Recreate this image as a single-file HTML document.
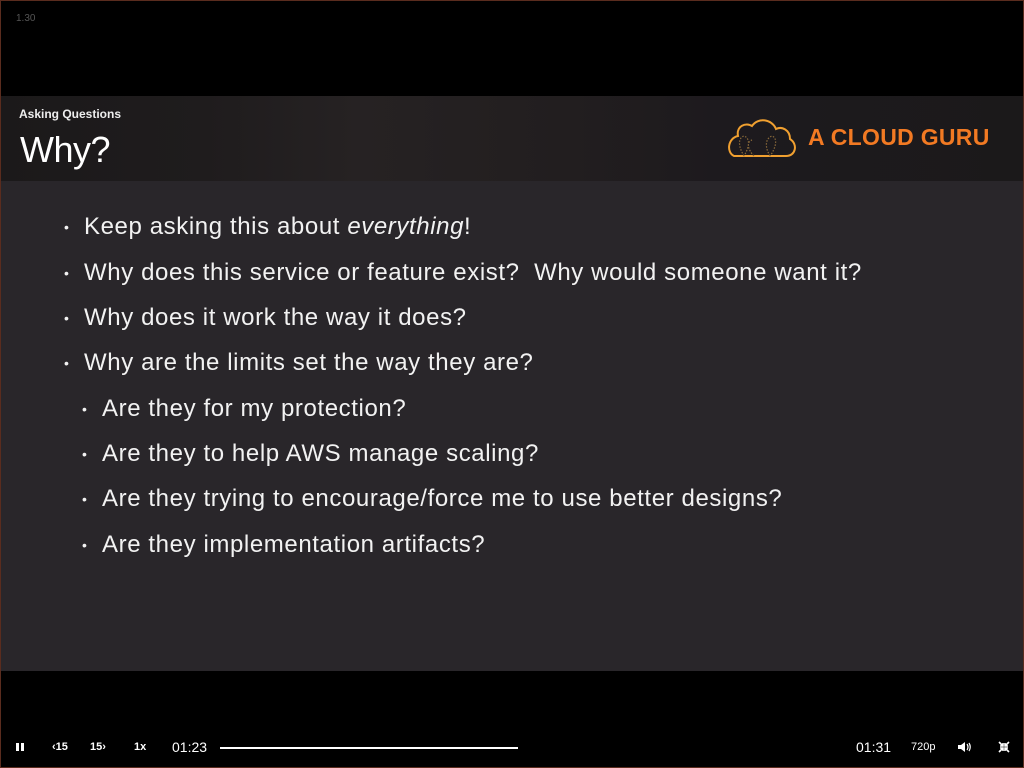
<!DOCTYPE html>
<html><head><meta charset="utf-8"><style>
*{margin:0;padding:0;box-sizing:border-box}
html,body{width:1024px;height:768px;background:#000;overflow:hidden;font-family:"Liberation Sans",sans-serif}
.frame{position:absolute;left:0;top:0;width:1024px;height:768px;border:1px solid #5a2c1e}
.ver{position:absolute;left:16px;top:13px;font-size:10px;color:#555}
.hdr{position:absolute;left:1px;top:96px;width:1022px;height:85px;background:linear-gradient(90deg,#1b191a 0%,#1f1c1d 20%,#262223 35%,#221e1f 55%,#1d1a1e 70%,#1b191a 100%)}
.sub{position:absolute;left:19px;top:107px;font-size:12px;font-weight:bold;color:#eee}
.title{position:absolute;left:20px;top:129px;font-size:36px;color:#fff;letter-spacing:-0.5px}
.body{position:absolute;left:1px;top:181px;width:1022px;height:490px;background:#29262a}
.li{position:absolute;font-size:24px;letter-spacing:0.6px;color:#f2f2f2;white-space:nowrap}
.li:before{content:"•";position:absolute;left:-20px;top:0;font-size:14px;line-height:29px}
.logo{position:absolute;left:808px;top:124px;font-size:23px;font-weight:bold;color:#f27a23;letter-spacing:0.3px}
.ctl{position:absolute;color:#fff;font-size:11px;font-weight:bold}
</style></head><body>
<div class="frame"></div>
<div class="ver">1.30</div>
<div class="hdr"></div>
<div class="sub">Asking Questions</div>
<div class="title">Why?</div>
<svg style="position:absolute;left:724px;top:116px" width="76" height="44" viewBox="0 0 76 44">
<path d="M10 40 H62 C72 40 74 28 66 23 C66 14 58 10 52 13 C48 3 34 1 28 10 C22 6 12 10 14 20 C4 22 2 36 10 40 Z" fill="none" stroke="#f0a030" stroke-width="2"/>
<path d="M20 40 C14 30 14 22 20 20 C26 22 26 30 20 40 M30 40 C24 34 22 26 28 24 M46 40 C40 30 42 22 48 20 C54 22 52 32 46 40" fill="none" stroke="#8a6a3a" stroke-width="1.2" stroke-dasharray="1.5 1.5"/>
</svg>
<div class="logo">A CLOUD GURU</div>
<div class="body"></div>
<div class="li" style="left:84px;top:213px">Keep asking this about <i>everything</i>!</div>
<div class="li" style="left:84px;top:259px">Why does this service or feature exist?&nbsp; Why would someone want it?</div>
<div class="li" style="left:84px;top:304px">Why does it work the way it does?</div>
<div class="li" style="left:84px;top:349px">Why are the limits set the way they are?</div>
<div class="li" style="left:102px;top:395px">Are they for my protection?</div>
<div class="li" style="left:102px;top:440px">Are they to help AWS manage scaling?</div>
<div class="li" style="left:102px;top:485px">Are they trying to encourage/force me to use better designs?</div>
<div class="li" style="left:102px;top:531px">Are they implementation artifacts?</div>
<div style="position:absolute;left:16px;top:743px;width:3px;height:8px;background:#fff"></div>
<div style="position:absolute;left:21px;top:743px;width:3px;height:8px;background:#fff"></div>
<div class="ctl" style="left:52px;top:741px">&lsaquo;15</div>
<div class="ctl" style="left:90px;top:741px">15&rsaquo;</div>
<div class="ctl" style="left:134px;top:741px">1x</div>
<div class="ctl" style="left:172px;top:739px;font-size:14px;font-weight:normal">01:23</div>
<div style="position:absolute;left:220px;top:747px;width:298px;height:2px;background:#fff"></div>
<div class="ctl" style="left:856px;top:739px;font-size:14px;font-weight:normal">01:31</div>
<div class="ctl" style="left:911px;top:741px;font-weight:normal">720p</div>
<svg style="position:absolute;left:957px;top:741px" width="14" height="12" viewBox="0 0 14 12"><path d="M1 4H4L8 1V11L4 8H1Z" fill="#fff"/><path d="M10 3Q12 6 10 9M12 2Q14.5 6 12 10" stroke="#fff" fill="none" stroke-width="1.2"/></svg>
<svg style="position:absolute;left:998px;top:741px" width="12" height="12" viewBox="0 0 12 12"><path d="M1 1L5 5M5 2V5H2M11 1L7 5M7 2V5H10M1 11L5 7M5 10V7H2M11 11L7 7M7 10V7H10" stroke="#fff" fill="none" stroke-width="1.6"/></svg>
</body></html>
